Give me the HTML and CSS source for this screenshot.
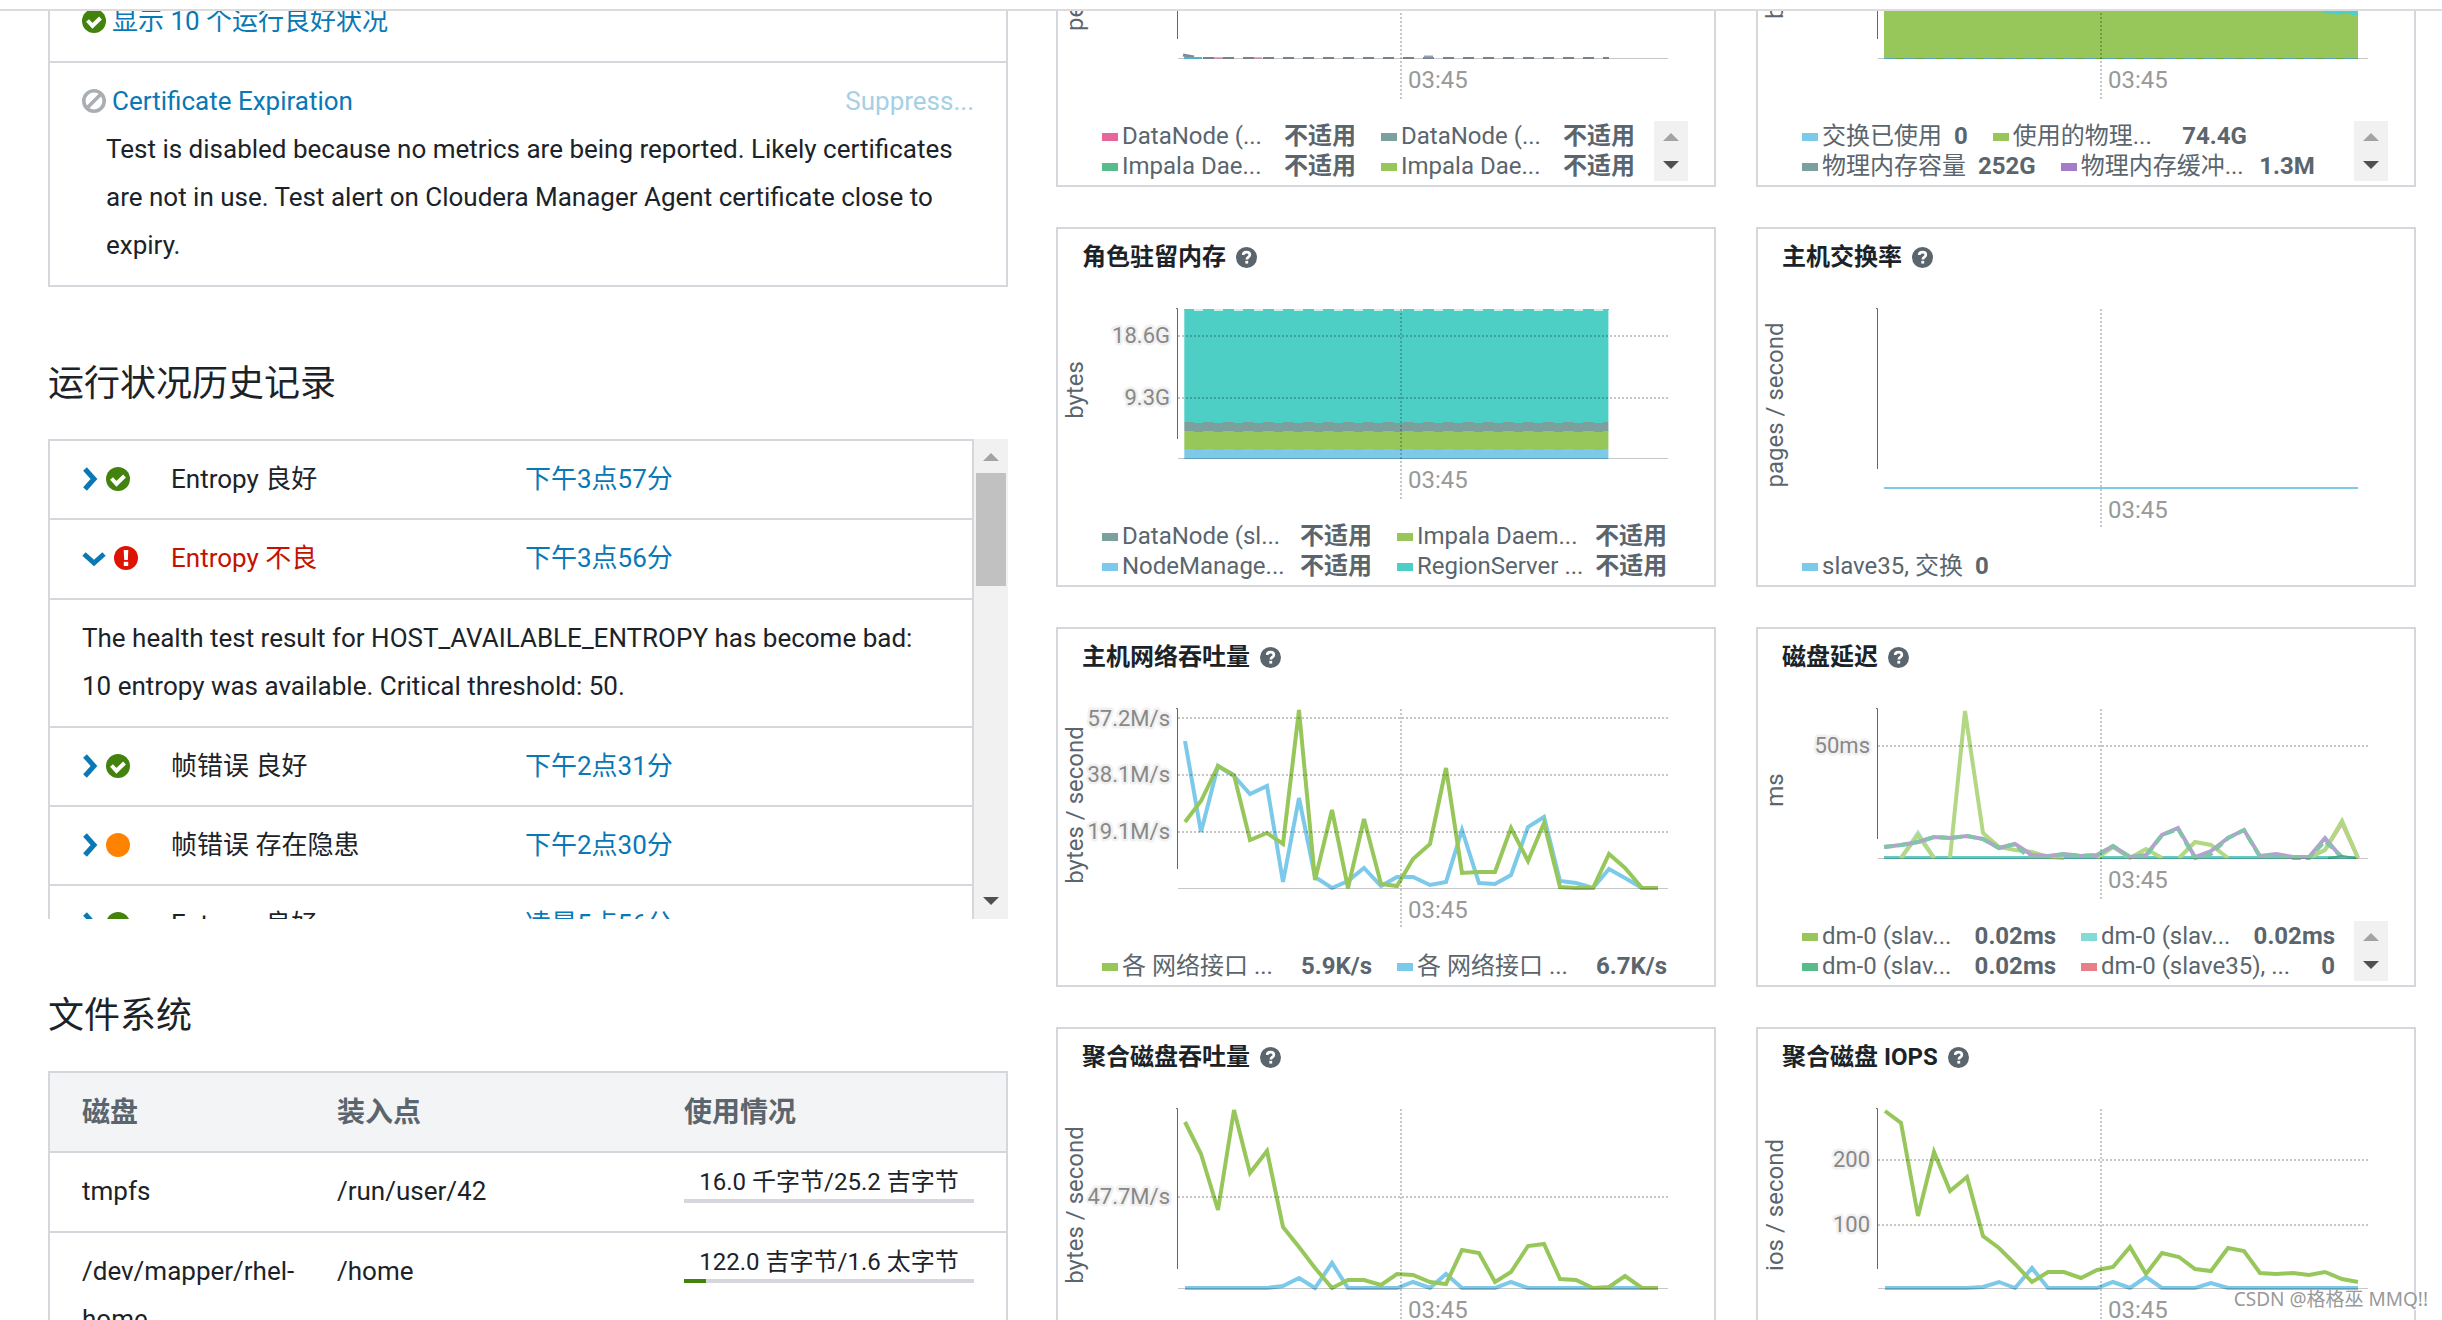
FILE: index.html
```html
<!DOCTYPE html>
<html lang="zh-CN">
<head>
<meta charset="utf-8">
<title>主机状态</title>
<link rel="stylesheet" href="styles.css">
</head>
<body>
<svg class="defs" aria-hidden="true">
  <symbol id="i-ok" viewBox="0 0 24 24"><circle cx="12" cy="12" r="12" fill="#43820d"/><path d="M5.500 11.500l5 5.300L18.500 9" fill="none" stroke="#fff" stroke-width="4"/></symbol>
  <symbol id="i-bad" viewBox="0 0 24 24"><circle cx="12" cy="12" r="12" fill="#dc1400"/><path d="M9.700 4h4.600l-.5 10h-3.600z" fill="#fff"/><rect x="9.800" y="15.800" width="4.400" height="4.200" fill="#fff"/></symbol>
  <symbol id="i-concern" viewBox="0 0 24 24"><circle cx="12" cy="12" r="12" fill="#ff8300"/></symbol>
  <symbol id="i-off" viewBox="0 0 24 24"><circle cx="12" cy="12" r="10.2" fill="none" stroke="#a9aeb2" stroke-width="3.6"/><path d="M5 19L19 5" stroke="#a9aeb2" stroke-width="3.6"/></symbol>
  <symbol id="i-right" viewBox="0 0 16 24"><path d="M3 2l9 10-9 10" fill="none" stroke="#0a78b4" stroke-width="5"/></symbol>
  <symbol id="i-down" viewBox="0 0 24 24"><path d="M2 8l10 9 10-9" fill="none" stroke="#0a78b4" stroke-width="5"/></symbol>
  <symbol id="i-help" viewBox="0 0 20 20"><circle cx="10" cy="10" r="10" fill="#5a656d"/><path d="M6.8 7.6C6.9 5.700 8.200 4.900 10 4.900s3.200 1 3.200 2.600c0 2.200-2.900 2-2.900 4.300" fill="none" stroke="#fff" stroke-width="2.500"/><rect x="8.900" y="13.200" width="2.700" height="2.600" fill="#fff"/></symbol>
  <symbol id="i-up-arrow" viewBox="0 0 16 8"><path d="M0 8L8 0l8 8z" fill="#a3a3a3"/></symbol>
  <symbol id="i-down-arrow" viewBox="0 0 16 8"><path d="M0 0l8 8 8-8z" fill="#505050"/></symbol>
</svg>

<header class="topbar"></header>
<main class="page">
  <div class="side">
    <ul class="health">
      <li class="health-item health-item-first">
        <div class="health-line"><svg class="ic"><use href="#i-ok"/></svg><a href="#healthy">显示 10 个运行良好状况</a></div>
      </li>
      <li class="health-item">
        <div class="health-line"><svg class="ic"><use href="#i-off"/></svg><a href="#cert">Certificate Expiration</a><a class="suppress" href="#suppress">Suppress...</a></div>
        <p class="health-text">Test is disabled because no metrics are being reported. Likely certificates are not in use. Test alert on Cloudera Manager Agent certificate close to expiry.</p>
      </li>
    </ul>

    <h2>运行状况历史记录</h2>
    <div class="history">
      <table class="grid-table history-table">
        <colgroup><col class="h-state"><col class="h-name"><col></colgroup>
        <tbody>
          <tr><td><span class="state"><button type="button" aria-label="展开"><svg class="ic-right"><use href="#i-right"/></svg></button><svg class="ic"><use href="#i-ok"/></svg></span></td><td>Entropy 良好</td><td><a href="#t1">下午3点57分</a></td></tr>
          <tr class="open"><td><span class="state"><button type="button" aria-label="收起"><svg class="ic"><use href="#i-down"/></svg></button><svg class="ic"><use href="#i-bad"/></svg></span></td><td class="bad">Entropy 不良</td><td><a href="#t2">下午3点56分</a></td></tr>
          <tr class="open"><td colspan="3">The health test result for HOST_AVAILABLE_ENTROPY has become bad: 10 entropy was available. Critical threshold: 50.</td></tr>
          <tr><td><span class="state"><button type="button" aria-label="展开"><svg class="ic-right"><use href="#i-right"/></svg></button><svg class="ic"><use href="#i-ok"/></svg></span></td><td>帧错误 良好</td><td><a href="#t3">下午2点31分</a></td></tr>
          <tr><td><span class="state"><button type="button" aria-label="展开"><svg class="ic-right"><use href="#i-right"/></svg></button><svg class="ic"><use href="#i-concern"/></svg></span></td><td>帧错误 存在隐患</td><td><a href="#t4">下午2点30分</a></td></tr>
          <tr><td><span class="state"><button type="button" aria-label="展开"><svg class="ic-right"><use href="#i-right"/></svg></button><svg class="ic"><use href="#i-ok"/></svg></span></td><td>Entropy 良好</td><td><a href="#t5">凌晨5点56分</a></td></tr>
        </tbody>
      </table>
      <div class="scrollbar"><svg class="arrow"><use href="#i-up-arrow"/></svg><div class="thumb"></div><svg class="arrow arrow-end"><use href="#i-down-arrow"/></svg></div>
    </div>

    <h2>文件系统</h2>
    <table class="grid-table fs-table">
      <colgroup><col class="f-disk"><col class="f-mount"><col></colgroup>
      <thead><tr><th>磁盘</th><th>装入点</th><th>使用情况</th></tr></thead>
      <tbody>
        <tr><td>tmpfs</td><td>/run/user/42</td><td><label class="usage">16.0 千字节/25.2 吉字节<progress max="1000" value="0"></progress></label></td></tr>
        <tr><td>/dev/mapper/rhel-home</td><td>/home</td><td><label class="usage">122.0 吉字节/1.6 太字节<progress max="1000" value="76"></progress></label></td></tr>
      </tbody>
    </table>
  </div>

  <div class="charts">
    <section class="card card-cut">
      <svg class="plot" viewBox="0 0 656 109">
        <text class="unit" transform="translate(25 20) rotate(-90)">percent</text>
        <path class="y-axis" d="M119.500 0V28"/>
        <path class="x-axis" d="M120 47.500H610"/>
        <path d="M125 44l11 2" stroke="#7f8c99" stroke-width="3"/><path d="M126 47h18" stroke="#4fb5c4" stroke-width="2"/>
        <path d="M154 47h12M194 47h10" stroke="#c75b86" stroke-width="1"/>
        <path d="M145 47H551" stroke="#76838f" stroke-width="2" stroke-dasharray="11 9"/>
        <path d="M366 45.500h9" stroke="#9aa0b0" stroke-width="2"/>
        <path class="dots" d="M343 2V88"/>
        <text class="time" x="350" y="77">03:45</text>
      </svg>
      <div class="legend legend-scroll">
        <ul>
          <li class="full"><i class="pink"></i><span>DataNode (...</span><b>不适用</b></li><li class="full"><i class="slate"></i><span>DataNode (...</span><b>不适用</b></li>
          <li class="full"><i class="green"></i><span>Impala Dae...</span><b>不适用</b></li><li class="full"><i class="lime"></i><span>Impala Dae...</span><b>不适用</b></li>
        </ul>
        <div class="mini-scroll"><svg class="arrow"><use href="#i-up-arrow"/></svg><svg class="arrow"><use href="#i-down-arrow"/></svg></div>
      </div>
    </section>

    <section class="card card-cut">
      <svg class="plot" viewBox="0 0 656 109">
        <text class="unit" transform="translate(25 8) rotate(-90)">bytes</text>
        <path class="y-axis" d="M119.500 0V28"/>
        <path class="x-axis" d="M120 47.500H610"/>
        <rect x="126" width="474" height="48" fill="#97c75b"/>
        <path d="M564 0h36v4h-6l-2-1h-10l-3 1-3-1h-9z" fill="#4dcfc5"/>
        <path d="M126 47.500H600" stroke="#6fa63c"/>
        <path d="M126 47.500H600" stroke="#5ba3bb" stroke-dasharray="12 8"/>
        <path class="dots" d="M343 2V88"/>
        <text class="time" x="350" y="77">03:45</text>
      </svg>
      <div class="legend legend-scroll">
        <ul>
          <li><i class="sky"></i><span>交换已使用</span><b>0</b></li><li class="full"><i class="lime"></i><span>使用的物理...</span><b>74.4G</b></li>
          <li><i class="slate"></i><span>物理内存容量</span><b>252G</b></li><li class="full"><i class="purple"></i><span>物理内存缓冲...</span><b>1.3M</b></li>
        </ul>
        <div class="mini-scroll"><svg class="arrow"><use href="#i-up-arrow"/></svg><svg class="arrow"><use href="#i-down-arrow"/></svg></div>
      </div>
    </section>

    <section class="card">
      <h3>角色驻留内存<svg class="help"><use href="#i-help"/></svg></h3>
      <svg class="plot" viewBox="0 0 656 229">
        <text class="unit" text-anchor="middle" transform="translate(25 99) rotate(-90)">bytes</text>
        <path class="y-axis" d="M118 17.500h1.500V148"/>
        <rect x="126" y="18" width="425" height="113" fill="#4dcfc5"/>
        <rect x="126" y="131" width="425" height="9" fill="#7ba09e"/>
        <rect x="126" y="140" width="425" height="18" fill="#97c75b"/>
        <rect x="126" y="158" width="425" height="10" fill="#7dc9ea"/>
        <path d="M136 19H551" stroke="#fff" stroke-opacity=".7" stroke-width="2" stroke-dasharray="9 11"/>
        <path d="M136 131H551" stroke="#4dcfc5" stroke-width="2" stroke-dasharray="9 11"/>
        <path d="M136 140H551" stroke="#7ba09e" stroke-width="2" stroke-dasharray="9 11"/>
        <path d="M136 158H551" stroke="#97c75b" stroke-width="2" stroke-dasharray="9 11"/>
        <path d="M126 19V168M550.500 19V168" stroke="#fff" stroke-opacity=".6"/>
        <path class="x-axis" d="M120 167.500H610"/>
        <path class="dots" d="M120 45H610M120 107H610M343 18V208"/>
        <text class="tick" x="112" y="52">18.6G</text><text class="tick" x="112" y="114">9.3G</text>
        <text class="time" x="350" y="197">03:45</text>
      </svg>
      <div class="legend legend-wide">
        <ul>
          <li class="full"><i class="slate"></i><span>DataNode (sl...</span><b>不适用</b></li><li class="full"><i class="lime"></i><span>Impala Daem...</span><b>不适用</b></li>
          <li class="full"><i class="sky"></i><span>NodeManage...</span><b>不适用</b></li><li class="full"><i class="teal"></i><span>RegionServer ...</span><b>不适用</b></li>
        </ul>
      </div>
    </section>

    <section class="card">
      <h3>主机交换率<svg class="help"><use href="#i-help"/></svg></h3>
      <svg class="plot" viewBox="0 0 656 259">
        <text class="unit" text-anchor="middle" transform="translate(25 114) rotate(-90)">pages / second</text>
        <path class="y-axis" d="M118 17.500h1.500V178"/>
        <path d="M126 197H600" stroke="#7dc9ea" stroke-width="2"/>
        <path class="dots" d="M343 18V238"/>
        <text class="time" x="350" y="227">03:45</text>
      </svg>
      <div class="legend legend-wide">
        <ul><li><i class="sky"></i><span>slave35, 交换</span><b>0</b></li></ul>
      </div>
    </section>

    <section class="card">
      <h3>主机网络吞吐量<svg class="help"><use href="#i-help"/></svg></h3>
      <svg class="plot" viewBox="0 0 656 259">
        <text class="unit" text-anchor="middle" transform="translate(25 114) rotate(-90)">bytes / second</text>
        <path class="y-axis" d="M118 17.500h1.500V178"/>
        <polyline class="line s-sky" points="127,50 143,141 160,75 176,85 192,103 209,95 225,191 241,107 257,186 274,197 290,190 306,177 323,195 339,186 355,186 372,194 388,191 404,139 421,192 437,193 453,184 470,136 486,126 502,190 518,192 535,197 551,178 567,187 584,197 600,197"/>
        <polyline class="line s-lime" points="127,131 143,110 160,75 176,84 192,149 209,142 225,153 241,19 257,189 274,119 290,197 306,128 323,193 339,195 355,168 372,153 388,77 404,182 421,181 437,181 453,137 470,170 486,132 502,196 518,197 535,197 551,163 567,177 584,197 600,197"/>
        <path class="x-axis" d="M120 197.500H610"/>
        <path class="dots" d="M120 27H610M120 84H610M120 141H610M343 18V238"/>
        <text class="tick" x="112" y="35">57.2M/s</text><text class="tick" x="112" y="91">38.1M/s</text><text class="tick" x="112" y="148">19.1M/s</text>
        <text class="time" x="350" y="227">03:45</text>
      </svg>
      <div class="legend legend-wide">
        <ul><li class="full"><i class="lime"></i><span>各 网络接口 ...</span><b>5.9K/s</b></li><li class="full"><i class="sky"></i><span>各 网络接口 ...</span><b>6.7K/s</b></li></ul>
      </div>
    </section>

    <section class="card">
      <h3>磁盘延迟<svg class="help"><use href="#i-help"/></svg></h3>
      <svg class="plot" viewBox="0 0 656 229">
        <text class="unit" text-anchor="middle" transform="translate(25 99) rotate(-90)">ms</text>
        <path class="y-axis" d="M118 17.500h1.500V148"/>
        <path d="M126 166.500H600" stroke="#62cbc4" stroke-width="3"/>
        <polyline class="line s-pale" points="143,167 160,142 176,167"/>
        <polyline class="line s-rose" points="551,166 567,159 584,132 600,167"/>
        <polyline class="line s-soft" points="143,167 160,144 176,167"/>
        <polyline class="line s-soft" points="192,167 207,20 225,142 241,156 257,159 274,161 290,166 306,167"/>
        <polyline class="line s-soft" points="339,167 355,156 372,167 388,158 404,167"/>
        <polyline class="line s-soft" points="421,167 437,151 453,154 470,167"/>
        <polyline class="line s-soft" points="551,167 567,159 584,130 600,167"/>
        <polyline class="line s-violet" points="126,156 143,154 160,151 176,146 192,147 209,145 225,148 241,157 257,153 274,164 290,165 306,163 323,165 339,164 355,155 372,166 388,164 404,144 420,137 437,166 453,160 470,147 486,139 502,165 518,163 535,166 551,166 567,147 584,167"/>
        <polyline class="line s-mint" points="126,156 143,154 160,151 176,146 192,147 209,145 225,148 241,157 257,153 270,166 290,166 306,163 323,165 339,164 355,155 372,166 388,165 404,144 420,138 437,167 453,163 470,147 486,139 502,166 518,165 535,167 551,167 567,150 584,166"/>
        <path d="M570 167l14-2 14 2" stroke="#45ab80" stroke-width="2" fill="none"/>
        <path class="x-axis" d="M120 167.500H610"/>
        <path class="dots" d="M120 55H610M343 18V208"/>
        <text class="tick" x="112" y="62">50ms</text>
        <text class="time" x="350" y="197">03:45</text>
      </svg>
      <div class="legend legend-scroll">
        <ul>
          <li class="full"><i class="lime"></i><span>dm-0 (slav...</span><b>0.02ms</b></li><li class="full"><i class="aqua"></i><span>dm-0 (slav...</span><b>0.02ms</b></li>
          <li class="full"><i class="green"></i><span>dm-0 (slav...</span><b>0.02ms</b></li><li class="full"><i class="red"></i><span>dm-0 (slave35), ...</span><b>0</b></li>
        </ul>
        <div class="mini-scroll"><svg class="arrow"><use href="#i-up-arrow"/></svg><svg class="arrow"><use href="#i-down-arrow"/></svg></div>
      </div>
    </section>

    <section class="card">
      <h3>聚合磁盘吞吐量<svg class="help"><use href="#i-help"/></svg></h3>
      <svg class="plot" viewBox="0 0 656 289">
        <text class="unit" text-anchor="middle" transform="translate(25 114) rotate(-90)">bytes / second</text>
        <path class="y-axis" d="M118 17.500h1.500V178"/>
        <polyline class="line s-sky" points="127,197 209,197 225,195 241,187 257,197 274,172 290,197 339,197 355,191 372,197 388,183 404,197 437,197 453,191 470,197 600,197"/>
        <polyline class="line s-lime" points="127,31 143,63 160,119 176,19 192,82 209,60 225,136 241,156 257,177 274,197 290,189 306,189 323,194 339,183 355,184 372,191 388,193 404,159 421,162 437,191 453,181 470,155 486,153 502,188 518,189 535,197 551,196 567,185 584,197 600,197"/>
        <path class="x-axis" d="M120 197.500H610"/>
        <path class="dots" d="M120 106H610M343 18V238"/>
        <text class="tick" x="112" y="113">47.7M/s</text>
        <text class="time" x="350" y="227">03:45</text>
      </svg>
    </section>

    <section class="card">
      <h3>聚合磁盘 IOPS<svg class="help"><use href="#i-help"/></svg></h3>
      <svg class="plot" viewBox="0 0 656 289">
        <text class="unit" text-anchor="middle" transform="translate(25 114) rotate(-90)">ios / second</text>
        <path class="y-axis" d="M118 17.500h1.500V178"/>
        <polyline class="line s-sky" points="127,197 209,197 225,196 241,191 257,197 274,177 290,197 339,197 355,191 372,197 388,186 404,197 437,197 453,192 470,197 600,197"/>
        <polyline class="line s-lime" points="127,20 143,32 160,125 176,61 192,100 209,86 225,145 241,157 257,173 274,191 290,181 306,181 323,187 339,179 355,176 372,156 388,183 404,162 421,166 437,178 453,180 470,157 486,160 502,182 518,183 535,182 551,184 567,181 584,188 600,191"/>
        <path class="x-axis" d="M120 197.500H610"/>
        <path class="dots" d="M120 69H610M120 134H610M343 18V238"/>
        <text class="tick" x="112" y="76">200</text><text class="tick" x="112" y="141">100</text>
        <text class="time" x="350" y="227">03:45</text>
      </svg>
    </section>
  </div>
</main>
<div class="watermark">CSDN @格格巫 MMQ!!</div>
</body>
</html>
```
FILE: styles.css
```css
* { box-sizing: border-box; }

body {
  margin: 0;
  height: 100vh;
  overflow: hidden;
  display: flex;
  flex-direction: column;
  background: #fff;
  color: #1b2329;
  font-family: Roboto, "Noto Sans CJK SC", sans-serif;
  font-size: 26px;
  line-height: 48px;
}

a { color: #0a78b4; text-decoration: none; }
ul { list-style: none; margin: 0; padding: 0; }
p { margin: 0; }

.defs { position: absolute; width: 0; height: 0; }
.topbar { flex: none; height: 11px; border-bottom: 2px solid #dcdcdc; }

.page {
  flex: 1;
  min-height: 0;
  overflow: hidden;
  display: grid;
  grid-template-columns: 12fr 17fr;
  align-items: start;
  gap: 48px;
  padding: 0 26px 0 48px;
}
.side, .charts { min-width: 0; }

.ic { flex: none; width: 24px; height: 24px; }
.ic-right { flex: none; width: 16px; height: 24px; }

/* health tests */
.health { border: 2px solid #d6d7dc; border-width: 0 2px 2px; }
.health-item { padding: 14px 32px 16px; border-top: 2px solid #d6d7dc; }
.health-item-first { border-top: 0; padding-top: 0; margin-top: -14px; }
.health-line { display: flex; align-items: center; gap: 6px; }
.health-text { padding-left: 24px; }
.suppress { margin-left: auto; color: #a5d0e5; }

h2 { margin: 73px 0 31px; font-size: 36px; line-height: 48px; font-weight: 400; }

/* tables */
.grid-table {
  width: 100%;
  table-layout: fixed;
  border-collapse: separate;
  border-spacing: 0;
  border: 2px solid #d6d7dc;
  border-width: 0 2px;
}
.grid-table td, .grid-table th {
  border-top: 2px solid #d6d7dc;
  padding: 14px 0 16px;
  text-align: left;
  vertical-align: top;
}
.grid-table td:first-child, .grid-table th:first-child { padding-left: 32px; }
.grid-table td:last-child { padding-right: 32px; }

.history { display: flex; height: 480px; overflow: hidden; }
.history-table { flex: 1; height: max-content; }
.history-table td { padding-bottom: 15px; }
.history-table .open td { padding-bottom: 16px; }
.h-state { width: 121px; }
.h-name { width: 354px; }
.state { display: flex; align-items: center; gap: 8px; height: 48px; }
.state button { display: flex; padding: 0; border: 0; background: none; }
.bad { color: #c41200; }

.scrollbar {
  flex: none;
  width: 34px;
  padding: 14px 2px;
  display: flex;
  flex-direction: column;
  align-items: center;
  background: #f1f1f1;
}
.arrow { display: block; flex: none; width: 16px; height: 8px; }
.arrow-end { margin-top: auto; }
.thumb { width: 100%; height: 113px; margin-top: 12px; background: #c1c1c1; }

.grid-table th {
  padding: 16px 0 14px;
  background: #f3f4f6;
  color: #5a656d;
  font-size: 28px;
  font-weight: 700;
}
.fs-table .f-disk { width: 287px; }
.fs-table .f-mount { width: 347px; }
.fs-table td:first-child { padding-right: 32px; }
.usage { display: block; font-size: 24px; line-height: 30px; text-align: center; }
progress {
  display: block;
  width: 100%;
  height: 4px;
  margin-top: 2px;
  border: 0;
  appearance: none;
  background: #d6d7dc;
}
progress::-webkit-progress-bar { background: #d6d7dc; }
progress::-webkit-progress-value { background: #43820d; }

/* charts */
.charts { display: grid; grid-template-columns: 1fr 1fr; gap: 40px; }
.card {
  display: flex;
  flex-direction: column;
  min-width: 0;
  border: 2px solid #d6d7dc;
  font-size: 24px;
  line-height: 30px;
}
.card-cut { border-top: 0; }
.card h3 {
  display: flex;
  align-items: center;
  gap: 10px;
  margin: 0;
  padding: 13px 24px 19px;
  font-size: 24px;
  line-height: 30px;
  font-weight: 700;
}
.help { width: 21px; height: 21px; }
.plot { display: block; width: 100%; }

.unit { font-size: 24px; fill: #5a656d; }
.time { font-size: 24px; fill: #999; }
.tick {
  font-size: 22px;
  fill: #888;
  text-anchor: end;
  paint-order: stroke;
  stroke: #f1f1f1;
  stroke-width: 5px;
  stroke-linejoin: round;
}
.y-axis { fill: none; stroke: #666; }
.x-axis { stroke: #000; stroke-opacity: .22; }
.dots { stroke: #000; stroke-opacity: .22; stroke-width: 2px; stroke-dasharray: 2 2; }
.line { fill: none; stroke-width: 4px; }
.s-lime { stroke: #97c75b; }
.s-sky { stroke: #7dc9ea; }
.s-pale { stroke: #b0dff0; }
.s-rose { stroke: #e0b0a8; }
.s-soft { stroke: #b2d884; }
.s-violet { stroke: #b79fd0; }
.s-mint { stroke: #82c4aa; stroke-dasharray: 9 5; }

.legend {
  display: flex;
  justify-content: space-between;
  margin-top: 1px;
  padding: 0 26px 4px 44px;
  color: #5a656d;
}
.legend-wide { padding-right: 46px; }
.legend ul { flex: 1; display: flex; flex-wrap: wrap; column-gap: 25px; }
.legend-scroll ul { max-width: 540px; }
.legend li { display: flex; align-items: center; white-space: nowrap; }
.legend i { flex: none; width: 16px; height: 8px; margin: 2px 4px 0 0; }
.legend span { margin-right: 12px; }
.legend b { margin-left: auto; }
.legend-scroll .full { width: 254px; }
.legend-wide .full { width: 270px; }
.mini-scroll {
  flex: none;
  width: 34px;
  height: 60px;
  padding: 12px 0;
  display: flex;
  flex-direction: column;
  align-items: center;
  justify-content: space-between;
  background: #f1f1f1;
}
.pink { background: #e6679b; }
.slate { background: #7ba09e; }
.green { background: #57bb8a; }
.lime { background: #97c75b; }
.sky { background: #7dc9ea; }
.teal { background: #4dcfc5; }
.aqua { background: #82dcd5; }
.purple { background: #a37cc7; }
.red { background: #e77f8b; }

.watermark {
  position: absolute;
  right: 14px;
  bottom: 8px;
  font-family: "Noto Sans", "Noto Sans CJK SC", sans-serif;
  font-size: 19px;
  line-height: 26px;
  color: #999;
  text-shadow: 1px 1px 0 #fff;
}
```
